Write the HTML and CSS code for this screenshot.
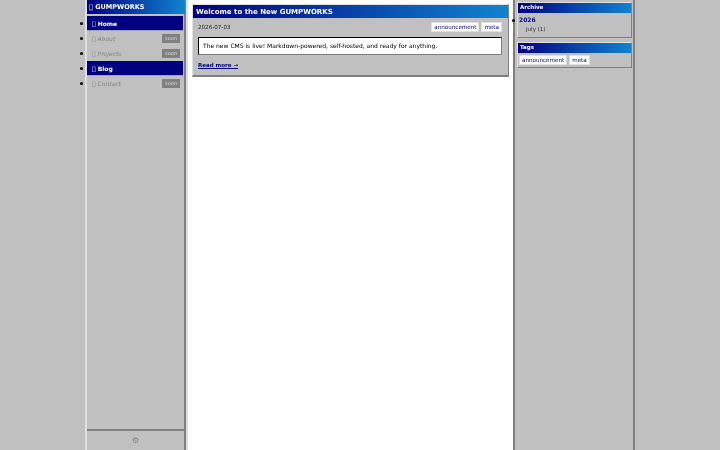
FILE: index.html
```html
<!DOCTYPE html>
<html lang="en">
<head>
<meta charset="utf-8">
<title>GUMPWORKS</title>
<link rel="stylesheet" href="styles.css">
</head>
<body>
<div class="shell">
  <aside class="sidebar">
    <div class="brand"><span class="ico">&#xF0E7;</span> GUMPWORKS</div>
    <ul class="nav">
      <li class="nav-item active"><span class="ico">&#xF015;</span> Home</li>
      <li class="nav-item off"><span class="label"><span class="ico">&#xF007;</span> About</span><span class="soon">soon</span></li>
      <li class="nav-item off"><span class="label"><span class="ico">&#xF0AD;</span> Projects</span><span class="soon">soon</span></li>
      <li class="nav-item active"><span class="ico">&#xF040;</span> Blog</li>
      <li class="nav-item off"><span class="label"><span class="ico">&#xF0E0;</span> Contact</span><span class="soon">soon</span></li>
    </ul>
    <div class="side-foot">⚙</div>
  </aside>
  <main class="main">
    <article class="post">
      <h1 class="post-title">Welcome to the New GUMPWORKS</h1>
      <div class="post-body">
        <div class="meta">
          <span class="date">2026-07-03</span>
          <span class="tags"><span class="tag">announcement</span><span class="tag">meta</span></span>
        </div>
        <p class="excerpt">The new CMS is live! Markdown-powered, self-hosted, and ready for anything.</p>
        <a class="more" href="#">Read more →</a>
      </div>
    </article>
  </main>
  <aside class="rail">
    <section class="widget">
      <h2 class="widget-title">Archive</h2>
      <ul class="archive">
        <li class="archive-year"><strong class="year">2026</strong><div class="month">July (1)</div></li>
      </ul>
    </section>
    <section class="widget">
      <h2 class="widget-title">Tags</h2>
      <div class="widget-tags"><span class="tag">announcement</span><span class="tag">meta</span></div>
    </section>
  </aside>
</div>
</body>
</html>
```
FILE: styles.css
```css
* { box-sizing: border-box; }
html, body { margin: 0; height: 100%; }
body {
  background: #c0c0c0;
  font-family: "DejaVu Sans", sans-serif;
  font-size: 6px;
  color: #000;
  overflow: hidden;
}
.shell {
  display: grid;
  grid-template-columns: 101px 327px 122px;
  width: 550px;
  height: 450px;
  margin-left: 85px;
  filter: blur(0.3px);
}
.sidebar {
  display: flex;
  flex-direction: column;
  background: #c0c0c0;
  border-left: 2px solid #dfdfdf;
  border-right: 2px solid #808080;
}
.brand {
  height: 14px;
  margin-right: -1px;
  padding: 0 2px;
  background: linear-gradient(90deg, #000080, #1084d0);
  color: #fff;
  font-size: 6.5px;
  font-weight: 700;
  line-height: 14px;
}
.nav {
  flex: 1;
  margin: 2px 0 0;
  padding: 0;
  list-style: none;
}
.nav-item {
  position: relative;
  height: 15px;
  margin-right: 1px;
  padding: 0 5px;
  line-height: 15px;
}
.nav-item::before,
.archive-year::before {
  content: "";
  position: absolute;
  width: 3px;
  height: 3px;
  border-radius: 50%;
  background: #000;
}
.nav-item::before { left: -7px; top: 6px; }
.nav-item.active {
  background: #000080;
  color: #fff;
  font-weight: 700;
  border-bottom: 1px solid #a0a0c0;
}
.nav-item.off { color: #808080; }
.label { font-style: italic; }
.soon {
  position: absolute;
  right: 3px;
  top: 3px;
  height: 9px;
  width: 18px;
  background: #808080;
  color: #dfdfdf;
  font-size: 5px;
  font-style: normal;
  line-height: 9px;
  text-align: center;
}
.side-foot {
  height: 21px;
  border-top: 2px solid #808080;
  color: #808080;
  font-size: 8px;
  line-height: 19px;
  text-align: center;
}
.main {
  background: #fff;
  padding: 4px 4px 0;
  border-left: 2px solid #dfdfdf;
}
.post {
  background: #c0c0c0;
  border: 1px solid #dfdfdf;
  border-right-color: #808080;
  border-bottom: 2px solid #808080;
}
.post-title {
  margin: 0;
  height: 13px;
  padding: 0 3px;
  background: linear-gradient(90deg, #000080, #1084d0);
  color: #fff;
  font-size: 7px;
  font-weight: 700;
  line-height: 14px;
}
.post-body { padding: 4px 6px 6px 5px; }
.meta {
  display: flex;
  justify-content: space-between;
  align-items: center;
  height: 10px;
  font-size: 5.6px;
  color: #222;
}
.tags, .widget-tags { display: flex; gap: 2px; }
.tag {
  background: #fff;
  color: #000080;
  border: 1px solid #dfdfdf;
  padding: 0 2px;
  font-size: 5.6px;
  line-height: 8px;
}
.excerpt {
  margin: 5px 0 0;
  height: 18px;
  padding: 0 4px;
  background: #fff;
  border: 1px solid #000;
  border-right-color: #808080;
  border-bottom-color: #808080;
  font-size: 6px;
  line-height: 16px;
}
.more {
  display: block;
  margin-top: 6px;
  color: #000080;
  font-size: 5.5px;
  font-weight: 700;
  line-height: 8px;
}
.rail {
  background: #c0c0c0;
  padding: 2px 1px 0 2px;
  border-left: 2px solid #808080;
  border-right: 2px solid #808080;
}
.widget {
  margin-bottom: 4px;
  border: 1px solid #dfdfdf;
  border-right-color: #808080;
  border-bottom-color: #808080;
}
.widget-title {
  margin: 0;
  height: 10px;
  padding: 0 2px;
  background: linear-gradient(90deg, #000080, #1084d0);
  color: #fff;
  font-size: 5.5px;
  font-weight: 700;
  line-height: 9px;
}
.archive { margin: 0; padding: 2px 1px 3px; height: 24px; list-style: none; }
.archive-year { position: relative; }
.archive-year::before { left: -7px; top: 4px; }
.year { color: #000080; font-size: 6px; line-height: 10px; display: block; }
.month { padding-left: 7px; font-size: 5.5px; line-height: 9px; color: #333; }
.widget-tags { padding: 2px 1px; }
```
